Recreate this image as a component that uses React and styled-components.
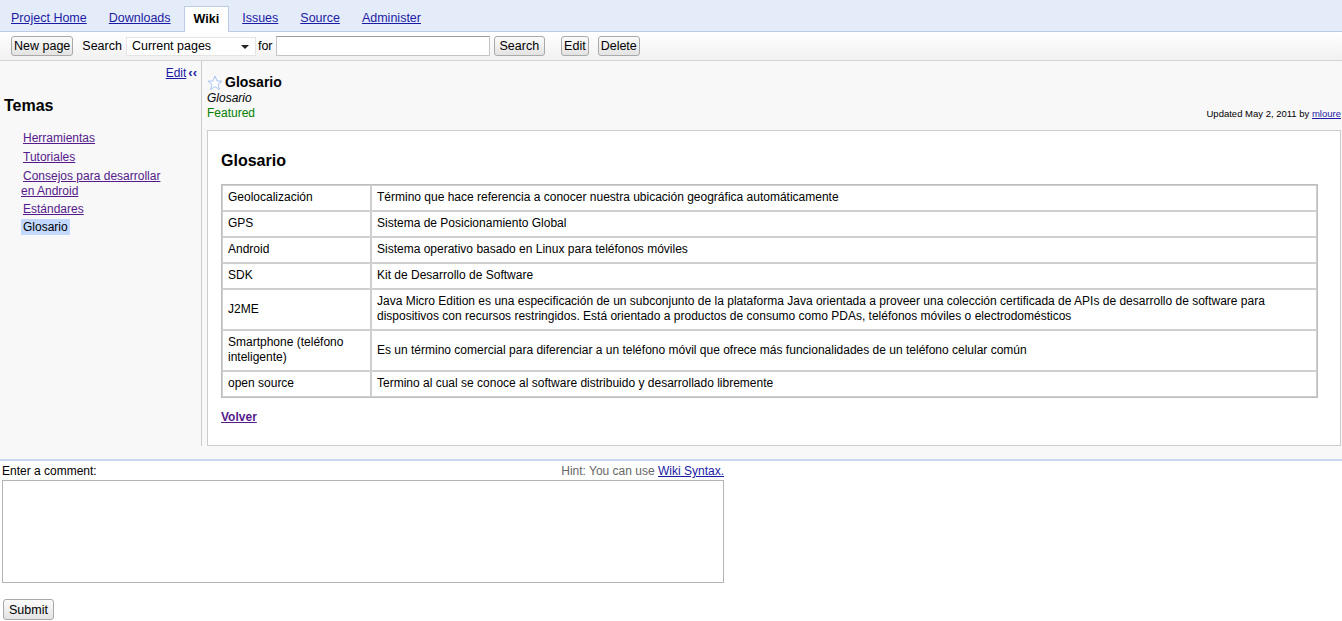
import React from "react";
import styled, { createGlobalStyle } from "styled-components";

const GlobalStyle = createGlobalStyle`
  body {
    margin: 0;
    background: #ffffff;
    font-family: "Liberation Sans", Arial, sans-serif;
    font-size: 12px;
    color: #000000;
  }
`;

const Page = styled.div`
  width: 1342px;
  overflow: hidden;
`;

// top tabs
const TabBar = styled.div`
  display: flex;
  align-items: flex-end;
  height: 31px;
  background: #e5ecf9;
  border-bottom: 1px solid #bccbe6;
`;

const Tab = styled.a`
  display: block;
  padding: 0 11px;
  height: 25px;
  line-height: 24px;
  font-size: 12.5px;
  color: ${(p) => (p.$active ? "#000000" : "#1b1ba5")};
  font-weight: ${(p) => (p.$active ? "bold" : "normal")};
  text-decoration: ${(p) => (p.$active ? "none" : "underline")};
  cursor: pointer;
  box-sizing: border-box;
  ${(p) =>
    p.$active &&
    `
    background: #ffffff;
    border: 1px solid #bccbe6;
    border-bottom: none;
    height: 26px;
    margin: 0 2px -1px;
    padding: 0 9px;
    line-height: 25px;
  `}
`;

// toolbar under tabs
const Toolbar = styled.div`
  display: flex;
  align-items: center;
  height: 28px;
  padding-left: 11px;
  background: linear-gradient(#ffffff, #f1f1f1);
  border-bottom: 1px solid #d4d4d4;
  font-size: 12.5px;
`;

const Button = styled.button`
  height: ${(p) => p.$h || 20}px;
  padding: 0 ${(p) => p.$px || 2}px;
  margin-left: ${(p) => p.$ml || 0}px;
  font-family: "Liberation Sans", Arial, sans-serif;
  font-size: 12.5px;
  color: #000000;
  background: linear-gradient(#fbfbfb, #e3e3e3);
  border: 1px solid #a9a9a9;
  border-radius: 3px;
  cursor: pointer;
`;

const Label = styled.span`
  margin-left: ${(p) => p.$ml || 0}px;
  margin-right: ${(p) => p.$mr || 0}px;
`;

const SelectWrap = styled.div`
  position: relative;
  width: 130px;
  height: 19px;
`;

const Select = styled.select`
  appearance: none;
  width: 100%;
  height: 100%;
  padding: 0 16px 0 5px;
  font-family: "Liberation Sans", Arial, sans-serif;
  font-size: 12.5px;
  background: #ffffff;
  border: 1px solid #e4e4e4;
  color: #000000;
`;

const Caret = styled.span`
  position: absolute;
  right: 7px;
  top: 8px;
  width: 0;
  height: 0;
  border-left: 4px solid transparent;
  border-right: 4px solid transparent;
  border-top: 4px solid #222222;
  pointer-events: none;
`;

const SearchInput = styled.input`
  width: 214px;
  height: 20px;
  box-sizing: border-box;
  border: 1px solid #c4c4c4;
  border-top-color: #9a9a9a;
  font-size: 13px;
`;

// main area
const Main = styled.div`
  display: flex;
  background: #f8f8f8;
  padding-bottom: 13px;
  border-bottom: 2px solid #c9d7f1;
`;

const Sidebar = styled.div`
  width: 197px;
  flex-shrink: 0;
  padding: 4px 0 0 4px;
  border-right: 1px solid #cccccc;
  box-sizing: content-box;
`;

const SideEdit = styled.div`
  text-align: right;
  padding-right: 4px;
  line-height: 15px;
`;

const BlueLink = styled.a`
  color: #1b1ba5;
  text-decoration: underline;
  cursor: pointer;
`;

const Collapse = styled.span`
  color: #1b1ba5;
  font-weight: bold;
  font-size: 13px;
  margin-left: 2px;
`;

const SideTitle = styled.div`
  margin-top: 16px;
  font-size: 16px;
  font-weight: bold;
  line-height: 18px;
`;

const SideList = styled.ul`
  list-style: none;
  margin: 16px 0 0 0;
  padding: 0 30px 0 17px;
`;

const SideItem = styled.li`
  line-height: 15px;
  margin-bottom: ${(p) => (p.$tight ? 3 : 4)}px;
`;

const SideLink = styled.a`
  padding: 1px 2px;
  color: ${(p) => (p.$current ? "#000000" : "#551a8b")};
  background: ${(p) => (p.$current ? "#c3d9ff" : "transparent")};
  text-decoration: ${(p) => (p.$current ? "none" : "underline")};
  cursor: pointer;
`;

const Content = styled.div`
  flex: 1;
  padding: 13px 1px 0 5px;
`;

const Header = styled.div`
  display: flex;
  justify-content: space-between;
  align-items: flex-end;
`;

const TitleRow = styled.div`
  display: flex;
  align-items: center;
  gap: 2px;
  font-size: 14px;
  font-weight: bold;
  line-height: 17px;
`;

const Summary = styled.div`
  font-style: italic;
  line-height: 15px;
`;

const Featured = styled.div`
  color: #008000;
  line-height: 15px;
`;

const Updated = styled.div`
  font-size: 9.5px;
  line-height: 15px;
  white-space: nowrap;
  color: #000000;
`;

const SmallLink = styled.a`
  color: #1b1ba5;
  text-decoration: underline;
`;

const WikiBox = styled.div`
  margin-top: 9px;
  background: #ffffff;
  border: 1px solid #cccccc;
  padding: 20px 22px 20px 13px;
`;

const Heading = styled.h2`
  margin: 0 0 14px 0;
  font-size: 16px;
  line-height: 19px;
  font-weight: bold;
`;

const Table = styled.table`
  width: 100%;
  border-collapse: separate;
  border-spacing: 0;
  border: 1px solid #bdbdbd;
`;

const Cell = styled.td`
  border: 1px solid #cfcfcf;
  padding: 4px 5px 5px;
  line-height: 15px;
  vertical-align: middle;
  width: ${(p) => (p.$term ? "137px" : "auto")};
`;

const Back = styled.a`
  display: inline-block;
  margin-top: 12px;
  font-weight: bold;
  line-height: 15px;
  color: #551a8b;
  text-decoration: underline;
  cursor: pointer;
`;

// comment form
const CommentArea = styled.div`
  width: 722px;
  padding: 3px 0 0 2px;
`;

const CommentHead = styled.div`
  display: flex;
  justify-content: space-between;
  line-height: 15px;
`;

const Hint = styled.span`
  color: #666666;
`;

const TextArea = styled.textarea`
  display: block;
  width: 722px;
  height: 103px;
  box-sizing: border-box;
  margin-top: 1px;
  border: 1px solid #b4b4b4;
  resize: none;
`;

const SubmitRow = styled.div`
  margin: 16px 0 0 1px;
`;

const Star = () => (
  <svg width="16" height="16" viewBox="0 0 16 16">
    <polygon
      points="8,1 10,6 15,6.2 11,9.4 12.5,14.6 8,11.6 3.5,14.6 5,9.4 1,6.2 6,6"
      fill="#ffffff"
      stroke="#a9c4f0"
      strokeWidth="1"
      strokeLinejoin="round"
    />
  </svg>
);

const tabs = ["Project Home", "Downloads", "Wiki", "Issues", "Source", "Administer"];

const topics = [
  "Herramientas",
  "Tutoriales",
  "Consejos para desarrollar en Android",
  "Estándares",
  "Glosario",
];

const terms = [
  ["Geolocalización", "Término que hace referencia a conocer nuestra ubicación geográfica automáticamente"],
  ["GPS", "Sistema de Posicionamiento Global"],
  ["Android", "Sistema operativo basado en Linux para teléfonos móviles"],
  ["SDK", "Kit de Desarrollo de Software"],
  [
    "J2ME",
    "Java Micro Edition es una especificación de un subconjunto de la plataforma Java orientada a proveer una colección certificada de APIs de desarrollo de software para dispositivos con recursos restringidos. Está orientado a productos de consumo como PDAs, teléfonos móviles o electrodomésticos",
  ],
  ["Smartphone (teléfono inteligente)", "Es un término comercial para diferenciar a un teléfono móvil que ofrece más funcionalidades de un teléfono celular común"],
  ["open source", "Termino al cual se conoce al software distribuido y desarrollado libremente"],
];

const App = () => {
  return (
    <Page>
      <GlobalStyle />
      <TabBar>
        {tabs.map((t) => (
          <Tab key={t} $active={t === "Wiki"}>
            {t}
          </Tab>
        ))}
      </TabBar>

      <Toolbar>
        <Button>New page</Button>
        <Label $ml={9} $mr={4}>Search</Label>
        <SelectWrap>
          <Select defaultValue="current">
            <option value="current">Current pages</option>
          </Select>
          <Caret />
        </SelectWrap>
        <Label $ml={2} $mr={3}>for</Label>
        <SearchInput />
        <Button $ml={4} $px={5}>Search</Button>
        <Button $ml={16}>Edit</Button>
        <Button $ml={9}>Delete</Button>
      </Toolbar>

      <Main>
        <Sidebar>
          <SideEdit>
            <BlueLink>Edit</BlueLink>
            <Collapse>‹‹</Collapse>
          </SideEdit>
          <SideTitle>Temas</SideTitle>
          <SideList>
            {topics.map((t, i) => (
              <SideItem key={t} $tight={i >= 2}>
                <SideLink $current={t === "Glosario"}>{t}</SideLink>
              </SideItem>
            ))}
          </SideList>
        </Sidebar>

        <Content>
          <Header>
            <div>
              <TitleRow>
                <Star />
                <span>Glosario</span>
              </TitleRow>
              <Summary>Glosario</Summary>
              <Featured>Featured</Featured>
            </div>
            <Updated>
              Updated May 2, 2011 by <SmallLink>mloure</SmallLink>
            </Updated>
          </Header>

          <WikiBox>
            <Heading>Glosario</Heading>
            <Table>
              <tbody>
                {terms.map(([term, def]) => (
                  <tr key={term}>
                    <Cell $term>{term}</Cell>
                    <Cell>{def}</Cell>
                  </tr>
                ))}
              </tbody>
            </Table>
            <Back>Volver</Back>
          </WikiBox>
        </Content>
      </Main>

      <CommentArea>
        <CommentHead>
          <span>Enter a comment:</span>
          <Hint>
            Hint: You can use <SmallLink>Wiki Syntax.</SmallLink>
          </Hint>
        </CommentHead>
        <TextArea />
        <SubmitRow>
          <Button $px={5} $h={21}>Submit</Button>
        </SubmitRow>
      </CommentArea>
    </Page>
  );
};

export default App;
